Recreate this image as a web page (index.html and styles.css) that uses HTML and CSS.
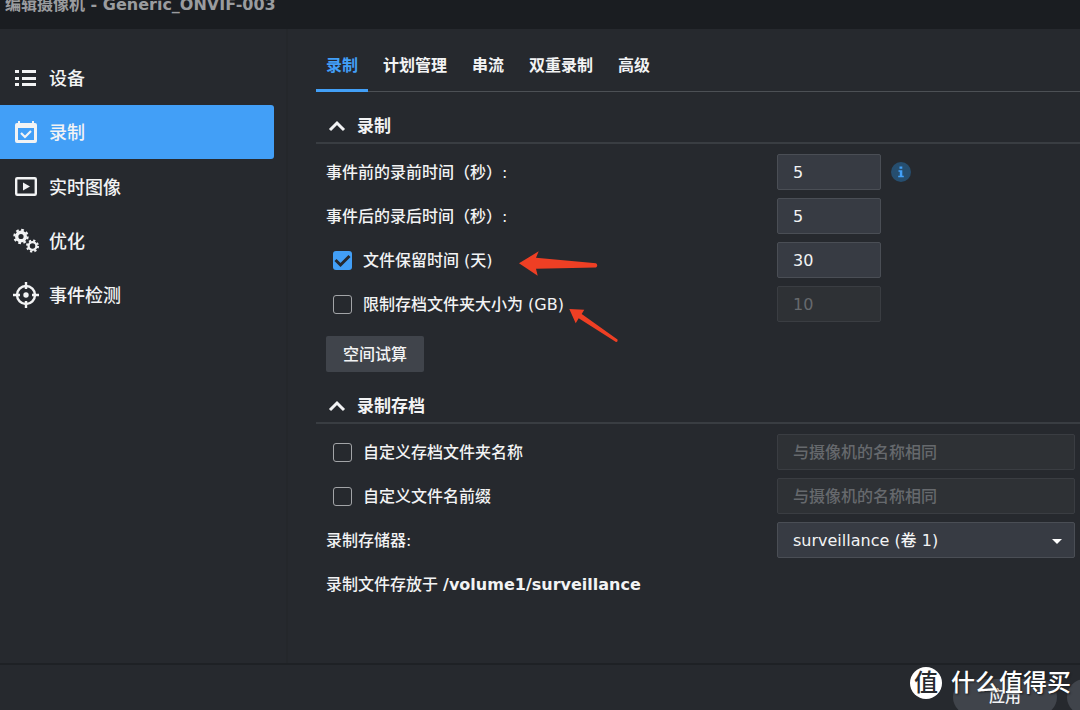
FILE: index.html
```html
<!DOCTYPE html>
<html lang="zh-CN">
<head>
<meta charset="utf-8">
<meta name="viewport" content="width=device-width, initial-scale=1">
<title>编辑摄像机 - Generic_ONVIF-003</title>
<link rel="stylesheet" href="styles.css">
</head>
<body>
<div class="window">
  <header class="titlebar"><h1 class="title">编辑摄像机 - Generic_ONVIF-003</h1></header>
  <div class="body">
    <nav class="sidebar">
      <a class="nav-item" href="#device">
        <svg class="nav-icon" viewBox="0 0 26 26"><path fill="currentColor" d="M2 5h4v3H2zM9 5h14v3H9zM2 12h4v3H2zM9 12h14v3H9zM2 18h4v3H2zM9 18h14v3H9z"/></svg>
        <span>设备</span></a>
      <a class="nav-item active" href="#record" aria-current="page">
        <svg class="nav-icon" viewBox="0 0 26 26"><path fill="currentColor" fill-rule="evenodd" d="M5 2h2v2h12V2h2v2h1q2 0 2 2v16q0 2-2 2H4q-2 0-2-2V6q0-2 2-2h1zM5 9v12h16V9z"/><path fill="none" stroke="currentColor" stroke-width="2.2" d="M8 14l4 4 6-6"/></svg>
        <span>录制</span></a>
      <a class="nav-item" href="#live">
        <svg class="nav-icon" viewBox="0 0 26 26"><rect x="3.2" y="4.200" width="19.6" height="16.6" rx="1" fill="none" stroke="currentColor" stroke-width="2.4"/><path fill="currentColor" d="M10 8.500l7 4-7 4z"/></svg>
        <span>实时图像</span></a>
      <a class="nav-item" href="#optimize">
        <svg class="nav-icon" viewBox="0 0 26 26"><g fill="none" stroke="currentColor"><circle cx="8" cy="8.500" r="4.300" stroke-width="3.400"/><circle cx="8" cy="8.500" r="6.600" stroke-width="2.200" stroke-dasharray="2.700 2.480"/><circle cx="19.500" cy="18" r="3.900" stroke-width="2.300"/><circle cx="19.500" cy="18" r="5.500" stroke-width="2" stroke-dasharray="2.200 2.120"/></g></svg>
        <span>优化</span></a>
      <a class="nav-item" href="#detect">
        <svg class="nav-icon" viewBox="0 0 26 26"><g fill="none" stroke="currentColor" stroke-width="2.400"><circle cx="13" cy="13" r="9"/><path d="M13 0v7M13 19v7M0 13h7M19 13h7"/></g><circle cx="13" cy="13" r="2.700" fill="currentColor"/></svg>
        <span>事件检测</span></a>
    </nav>
    <main class="content">
      <div class="tabs" role="tablist">
        <button class="tab selected" role="tab" aria-selected="true">录制</button>
        <button class="tab" role="tab">计划管理</button>
        <button class="tab" role="tab">串流</button>
        <button class="tab" role="tab">双重录制</button>
        <button class="tab" role="tab">高级</button>
      </div>
      <section class="group">
        <h2 class="heading"><svg class="chevron" viewBox="0 0 18 12"><path d="M2 10l7-7 7 7"/></svg>录制</h2>
        <div class="row">
          <label class="caption" for="pre">事件前的录前时间（秒）:</label>
          <div class="field"><input class="input short" id="pre" type="text" value="5">
            <svg class="info" viewBox="0 0 20 20" role="img" aria-label="信息"><circle cx="10" cy="10" r="10" fill="#264e6f"/><path fill="#42a0f8" d="M8.500 4.500h2.800v2.300H8.500zM7.500 8.200h3.800v5.600h1.500v1.500H7.200v-1.500h1.600V9.700H7.500z"/></svg></div>
        </div>
        <div class="row">
          <label class="caption" for="post">事件后的录后时间（秒）:</label>
          <div class="field"><input class="input short" id="post" type="text" value="5"></div>
        </div>
        <div class="row">
          <label class="option" for="keep"><input class="check" id="keep" type="checkbox" checked><span class="caption">文件保留时间 (天)</span></label>
          <div class="field"><input class="input short" type="text" value="30" aria-label="文件保留时间 (天)"></div>
        </div>
        <div class="row">
          <label class="option" for="limit"><input class="check" id="limit" type="checkbox"><span class="caption">限制存档文件夹大小为 (GB)</span></label>
          <div class="field"><input class="input short" type="text" value="10" aria-label="限制存档文件夹大小为 (GB)" disabled></div>
        </div>
        <div class="actions"><button class="button">空间试算</button></div>
      </section>
      <section class="group">
        <h2 class="heading"><svg class="chevron" viewBox="0 0 18 12"><path d="M2 10l7-7 7 7"/></svg>录制存档</h2>
        <div class="row">
          <label class="option" for="folder"><input class="check" id="folder" type="checkbox"><span class="caption">自定义存档文件夹名称</span></label>
          <div class="field"><input class="input" type="text" placeholder="与摄像机的名称相同" aria-label="自定义存档文件夹名称" disabled></div>
        </div>
        <div class="row">
          <label class="option" for="prefix"><input class="check" id="prefix" type="checkbox"><span class="caption">自定义文件名前缀</span></label>
          <div class="field"><input class="input" type="text" placeholder="与摄像机的名称相同" aria-label="自定义文件名前缀" disabled></div>
        </div>
        <div class="row">
          <label class="caption" for="storage">录制存储器:</label>
          <div class="field select-wrap"><select class="input select" id="storage"><option>surveillance (卷 1)</option></select><span class="caret"></span></div>
        </div>
        <p class="path">录制文件存放于 <strong>/volume1/surveillance</strong></p>
      </section>
    </main>
  </div>
  <footer class="footer">
    <button class="pill">应用</button>
    <button class="pill cut" aria-label="关闭"></button>
  </footer>
  <svg class="arrows" viewBox="0 0 100 92" aria-hidden="true"><path fill="#ee3f24" d="M1 13.300L20.700 1.300 18 7.700 78 13.300Q80.500 15.500 78 17.500L18 18.700 19.700 25.700zM51.300 59L66.300 59.700 63.700 64 99.500 89.500Q100 92 98 92L60.700 68.300 57.700 73.300z"/></svg>
  <div class="watermark"><span class="seal">值</span>什么值得买</div>
</div>
</body>
</html>
```
FILE: styles.css
```css
* { box-sizing: border-box; }

body {
  margin: 0;
  background: #26292e;
  color: #f2f3f4;
  font: 500 16px/24px "DejaVu Sans", "Noto Sans CJK SC", sans-serif;
}

button, input, select { font: inherit; color: inherit; }
h1, h2, p { margin: 0; }

.window {
  position: relative;
  display: grid;
  grid-template-rows: auto 1fr auto;
  height: 100vh;
  overflow: hidden;
}

.titlebar {
  height: 29px;
  padding: 1px 0 0 5px;
  background: #1a1d21;
}
.title {
  font-size: 16px;
  line-height: 8px;
  color: #9a9c9f;
}

.body {
  display: grid;
  grid-template-columns: 288px 1fr;
  min-height: 0;
}

.sidebar {
  padding: 22px 12px 0 0;
  border-right: 2px solid #24272b;
}
.nav-item {
  display: flex;
  align-items: center;
  gap: 10px;
  height: 54px;
  padding-left: 13px;
  border-radius: 0 3px 3px 0;
  color: inherit;
  font-size: 18px;
  text-decoration: none;
}
.nav-item span { padding-top: 2px; }
.nav-item.active {
  margin-bottom: 1px;
  background: #429ff7;
}
.nav-icon { width: 26px; height: 26px; }

.content { padding: 13px 0 0 28px; }

.tabs {
  display: flex;
  gap: 5px;
  height: 50px;
  border-bottom: 1px solid #4c5055;
}
.tab {
  height: 50px;
  padding: 0 10px;
  border: 0;
  border-bottom: 3px solid transparent;
  background: none;
  font-weight: 700;
}
.tab.selected {
  border-color: #429ff7;
  color: #429ff7;
}

.group { padding-top: 17px; }
.heading {
  display: flex;
  align-items: center;
  gap: 11px;
  height: 35px;
  margin-bottom: 6px;
  padding-left: 12px;
  border-bottom: 2px solid #393d42;
  font-size: 17px;
}
.chevron {
  width: 18px;
  height: 12px;
  fill: none;
  stroke: #f2f3f4;
  stroke-width: 3;
}

.row {
  display: grid;
  grid-template-columns: 451px 1fr;
  align-items: center;
  height: 44px;
  padding: 0 5px 0 10px;
}
.caption { padding-top: 2px; }
.option {
  display: flex;
  align-items: center;
  gap: 11px;
  padding-left: 7px;
}
.check {
  appearance: none;
  width: 19px;
  height: 19px;
  margin: 0;
  border: 1px solid #a2a4a7;
  border-radius: 3px;
}
.check:checked {
  border: 0;
  background: #429ff7 url("data:image/svg+xml,%3Csvg xmlns='http://www.w3.org/2000/svg' viewBox='0 0 19 19'%3E%3Cpath d='M2.500 9l5 5 9-9' fill='none' stroke='%2326292e' stroke-width='3'/%3E%3C/svg%3E");
}

.field {
  display: flex;
  align-items: center;
  gap: 10px;
}
.input {
  width: 100%;
  height: 36px;
  padding: 1px 15px 0;
  border: 1px solid #4a4e55;
  border-radius: 2px;
  background: #373b43;
}
.input.short { width: 104px; }
.input:disabled {
  border-color: #3a3d42;
  background: #2e3135;
  color: #66696d;
}
.input::placeholder { color: #66696d; }
.info { width: 20px; height: 20px; }

.select-wrap { position: relative; }
.select { appearance: none; }
.caret {
  position: absolute;
  top: 17px;
  right: 13px;
  border: 5px solid transparent;
  border-top-color: #fff;
  border-bottom: 0;
  pointer-events: none;
}

.actions { padding: 10px 10px 0; }
.button {
  height: 36px;
  padding: 1px 17px 0;
  border: 0;
  border-radius: 2px;
  background: #40444b;
}
.path {
  padding: 11px 10px;
}

.footer {
  display: flex;
  justify-content: flex-end;
  gap: 10px;
  height: 47px;
  padding-top: 14px;
  border-top: 2px solid #1e2125;
}
.pill {
  flex: none;
  width: 104px;
  height: 36px;
  border: 0;
  border-radius: 18px;
  background: #40444b;
}
.pill.cut { margin-right: -91px; }

.arrows {
  position: absolute;
  top: 250px;
  left: 518px;
  width: 100px;
  height: 92px;
}

.watermark {
  position: absolute;
  right: 9px;
  bottom: 11px;
  display: flex;
  align-items: center;
  gap: 9px;
  height: 32px;
  color: #fff;
  font-size: 24px;
  text-shadow: 1px 1px 2px #1a1d21;
}
.seal {
  width: 32px;
  border-radius: 50%;
  background: #fff;
  color: #26292e;
  line-height: 32px;
  text-align: center;
  text-shadow: none;
}
```
